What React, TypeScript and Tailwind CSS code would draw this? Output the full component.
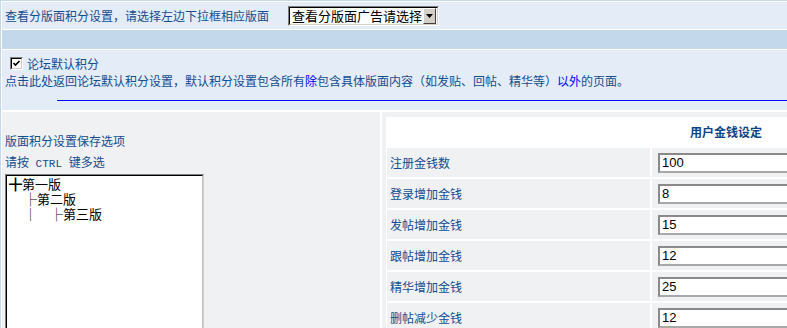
import React from "react";

const moneyRows = [
  { label: "注册金钱数", value: "100" },
  { label: "登录增加金钱", value: "8" },
  { label: "发帖增加金钱", value: "15" },
  { label: "跟帖增加金钱", value: "12" },
  { label: "精华增加金钱", value: "25" },
  { label: "删帖减少金钱", value: "12" },
  { label: "转帖减少金钱", value: "5" },
];

const cjk = "font-['Noto_Sans_CJK_SC',sans-serif]";

export default function App() {
  return (
    <div className={`w-[787px] h-[328px] overflow-hidden bg-[#c4d8ec] pl-px pt-px text-[12px] leading-[14px] text-[#134c8f] ${cjk}`}>
      <div className="h-full bg-white pl-px pt-px flex flex-col gap-px">
        {/* top row: selector */}
        <div className="h-[27px] shrink-0 bg-[#e4ecf8] flex items-center">
          <div className="w-[286px] pl-[3px] whitespace-nowrap">
            查看分版面积分设置，请选择左边下拉框相应版面
          </div>
          <div className="h-[20px] w-[151px] border border-t-[#808080] border-l-[#808080] border-b-white border-r-white">
            <div className="h-full border border-t-black border-l-black border-b-[#d4d0c8] border-r-[#d4d0c8] bg-white flex items-center">
              <span className="flex-1 pl-[2px] text-[13px] leading-[16px] text-black whitespace-nowrap">
                查看分版面广告请选择
              </span>
              <span className="w-[13px] h-[16px] mr-px bg-[#d4d0c8] border border-t-white border-l-white border-b-[#404040] border-r-[#404040] flex items-center justify-center">
                <svg width="7" height="4" viewBox="0 0 7 4">
                  <path d="M0 0h7L3.5 4z" fill="#000" />
                </svg>
              </span>
            </div>
          </div>
        </div>

        {/* bar */}
        <div className="h-[19px] shrink-0 bg-[#c4d8ec]" />

        {/* default points */}
        <div className="h-[60px] shrink-0 bg-[#e4ecf8] pt-[7px] flex flex-col">
          <div className="flex items-center h-[13px] pl-[8px]">
            <span className="w-[13px] h-[13px] border border-t-[#808080] border-l-[#808080] border-b-white border-r-white">
              <span className="block w-full h-full border border-t-black border-l-black border-b-[#d4d0c8] border-r-[#d4d0c8] bg-white">
                <svg width="9" height="9" viewBox="0 0 9 9" className="block">
                  <path d="M1.5 4l2 2 4-4" stroke="#000" strokeWidth="1.6" fill="none" />
                </svg>
              </span>
            </span>
            <span className="ml-[4px]">论坛默认积分</span>
          </div>
          <div className="mt-[4px] pl-[3px] whitespace-nowrap">
            点击此处返回论坛默认积分设置，默认积分设置包含所有<span className="text-[#0000ff]">除</span>
            包含具体版面内容（如发贴、回帖、精华等）<span className="text-[#0000ff]">以外</span>的页面。
          </div>
          <div className="mt-[12px] ml-[55px] h-px bg-[#0000ff]" />
        </div>

        {/* board settings */}
        <div className="mt-px flex-1 flex gap-[2px] bg-white">
          <div className="w-[378px] shrink-0 bg-[#f0f1f3] pl-[3px] pt-[22px]">
            <div className="h-[14px]">版面积分设置保存选项</div>
            <div className="mt-[7px] h-[14px] whitespace-pre">
              请按<span className="font-['Liberation_Mono',monospace] text-[11px] leading-[14px]"> CTRL </span>键多选
            </div>
            <div className="mt-[5px] w-[199px] h-[200px] border border-t-[#808080] border-l-[#808080] border-b-[#d4d0c8] border-r-[#d4d0c8]">
              <div className="h-full border border-t-black border-l-black border-b-[#c0c0c0] border-r-[#c0c0c0] bg-white text-black text-[13px] leading-[15px] pl-[2px] whitespace-pre">
                <div>╋第一版</div>
                <div className="pl-[15px]">├第二版</div>
                <div className="pl-[15px]">│　├第三版</div>
              </div>
            </div>
          </div>

          <div className="flex-1 overflow-hidden bg-[#f0f1f3] pt-[5px] pl-[4px]">
            <div className="w-[680px] bg-white p-px grid grid-cols-[263px_1fr] gap-[2px]">
              <div className="col-span-2 h-[28px] bg-white flex items-center justify-center font-bold text-[#0f4285]">
                用户金钱设定
              </div>
              {moneyRows.map((row) => (
                <React.Fragment key={row.label}>
                  <div className="h-[29px] bg-[#f0f1f3] flex items-center pl-[3px]">{row.label}</div>
                  <div className="h-[29px] bg-[#f0f1f3] flex items-center pl-[6px]">
                    <div className="w-[300px] h-[20px] border-2 border-t-[#8a8a8a] border-l-[#8a8a8a] border-b-[#a8a8a8] border-r-[#a8a8a8] bg-white pl-[2px] flex items-center text-black text-[13px] font-['Liberation_Sans',sans-serif]">
                      {row.value}
                    </div>
                  </div>
                </React.Fragment>
              ))}
            </div>
          </div>
        </div>
      </div>
    </div>
  );
}
